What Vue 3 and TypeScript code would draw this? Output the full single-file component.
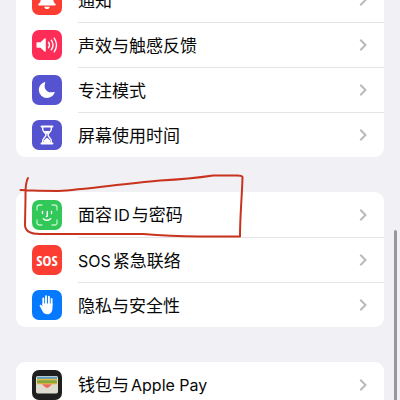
<script setup lang="ts">
type IconName = 'bell' | 'sound' | 'moon' | 'hourglass' | 'face' | 'sos' | 'hand' | 'wallet'

interface TextPart {
  text: string
  latin?: boolean
}

interface SettingRow {
  icon: IconName
  parts: TextPart[]
}

const groups: SettingRow[][] = [
  [
    { icon: 'bell', parts: [{ text: '通知' }] },
    { icon: 'sound', parts: [{ text: '声效与触感反馈' }] },
    { icon: 'moon', parts: [{ text: '专注模式' }] },
    { icon: 'hourglass', parts: [{ text: '屏幕使用时间' }] },
  ],
  [
    { icon: 'face', parts: [{ text: '面容' }, { text: 'ID', latin: true }, { text: '与密码' }] },
    { icon: 'sos', parts: [{ text: 'SOS', latin: true }, { text: '紧急联络' }] },
    { icon: 'hand', parts: [{ text: '隐私与安全性' }] },
  ],
  [{ icon: 'wallet', parts: [{ text: '钱包与' }, { text: 'Apple Pay', latin: true }] }],
]
</script>

<template>
  <main class="screen">
    <nav class="groups">
      <ul v-for="(group, g) in groups" :key="g" class="card">
        <li v-for="row in group" :key="row.icon">
          <a href="#" class="row">
            <span class="tile" :class="row.icon">
              <span v-if="row.icon === 'sos'" class="sos-text" aria-hidden="true">SOS</span>
              <svg v-else viewBox="0 0 30 30" aria-hidden="true">
                <g v-if="row.icon === 'bell'" fill="#fff">
                  <path d="M15 4.500c-4 0-6 3-6 7 0 5-1 6-2.500 7.600-.6.7-.3 1.400.7 1.400h15.600c1 0 1.300-.7.7-1.400C22 17.500 21 16.500 21 11.500c0-4-2-7-6-7Z" />
                  <path d="M12.200 21.800h5.600c-.3 1.500-1.300 2.300-2.800 2.300s-2.500-.8-2.800-2.300Z" />
                </g>
                <g v-else-if="row.icon === 'sound'">
                  <path d="M5.300 12.200h3.200l4-3.700c.7-.6 1.300-.3 1.300.5v12c0 .8-.6 1.100-1.300.5l-4-3.700H5.300c-.5 0-.8-.3-.8-.8v-4c0-.5.300-.8.8-.8Z" fill="#fff" />
                  <g fill="none" stroke="#fff" stroke-linecap="round" stroke-width="1.400">
                    <path d="M16.500 12.200q2 2.800 0 5.600" />
                    <path d="M19.300 10.200q3.400 4.800 0 9.600" />
                    <path d="M22.200 8.200q4.600 6.800 0 13.600" />
                  </g>
                </g>
                <path
                  v-else-if="row.icon === 'moon'"
                  d="M12.400 7.200c.6-.3 1 .1.800.7-2.200 5.800 2.200 10.700 8.600 9.100.7-.2 1.100.2.800.8-1.300 3.200-4.200 5.200-7.600 5.200A8.200 8.200 0 0 1 6.800 15c0-3.500 2.200-6.600 5.600-7.800Z"
                  fill="#fff"
                />
                <g v-else-if="row.icon === 'hourglass'">
                  <path d="M9.500 6.500h11M9.500 23.500h11" stroke="#fff" stroke-width="1.900" stroke-linecap="round" />
                  <path d="M10.700 7v2.300c0 2.700 3.300 3.700 3.300 5.700s-3.300 3-3.300 5.700V23h8.600v-2.300c0-2.700-3.300-3.700-3.300-5.700s3.300-3 3.300-5.700V7" fill="none" stroke="#fff" stroke-width="1.400" />
                  <path d="M12 11h6l-2.500 3h-1ZM14.500 18h1l2.800 2.400v2.100h-6.600v-2.100Z" fill="#fff" />
                </g>
                <g v-else-if="row.icon === 'face'" fill="none" stroke="#fff" stroke-linecap="round">
                  <path
                    d="M5 10V7.500Q5 5 7.500 5H10M20 5h2.500Q25 5 25 7.500V10M25 20v2.500Q25 25 22.500 25H20M10 25H7.500Q5 25 5 22.500V20"
                    stroke="#b9f2c4"
                    stroke-width="1.300"
                  />
                  <path d="M10.500 11.500v2M19.500 11.500v2M15.300 11.500v4.300q0 .8-1 .8M11.300 18.700q3.700 3.300 7.400 0" stroke-width="1.400" />
                </g>
                <g v-else-if="row.icon === 'hand'">
                  <path d="M11.300 15V8.500M14 14V6.300M16.900 14V6.700M19.600 15V9" stroke="#fff" stroke-width="1.900" stroke-linecap="round" />
                  <path
                    d="M10.400 13.500h10.100v4.500c0 3.700-1.900 6.300-5 6.300-2.600 0-4-1.200-5.100-3.300l-2.700-5c-.4-.9.900-1.600 1.600-.9l1.100 1.500Z"
                    fill="#fff"
                  />
                </g>
                <g v-else>
                  <rect x="4" y="6" width="22" height="17.500" rx="1.800" fill="#dedbd0" />
                  <path d="M5 9V7.800Q5 6.800 6 6.800h18q1 0 1 1V9Z" fill="#579cc1" />
                  <path d="M5 8.800h20v1.700H5Z" fill="#e0b94a" />
                  <path d="M5 10.300h20v3.500H5Z" fill="#86a637" />
                  <path d="M5 13h20v1.200H5Z" fill="#d8ae45" />
                  <path d="M10 14.200h10l-1.500 1.600-2.200 1.700q-1.300.8-2.600 0l-2.200-1.700Z" fill="#ef6b58" />
                </g>
              </svg>
            </span>
            <span class="body">
              <span class="label">
                <span v-for="part in row.parts" :key="part.text" :class="{ latin: part.latin }">{{ part.text }}</span>
              </span>
              <svg class="chevron" viewBox="0 0 8 14" aria-hidden="true">
                <path d="m1.300 1.700 5.200 5.300-5.200 5.300" />
              </svg>
            </span>
          </a>
        </li>
      </ul>
    </nav>
    <div class="scroll-thumb"></div>
    <svg class="marker" viewBox="0 0 400 400" aria-hidden="true">
      <path d="M28 178C25 183 25.500 190 25.500 198L25 225C25 231 31 234 40 234L143 234Q170 236 200 236.500L240 236.500C240 215 242 197 242.500 177Q242 175.500 237 175.500L213 175.500Q190 179 160 180.500C120 184 85 189.500 58 191Q38 191 20.500 190" />
    </svg>
  </main>
</template>

<style>
body {
  margin: 0;
  background: #f0f0f5;
}
</style>

<style scoped>
.screen {
  position: relative;
  height: 100vh;
  overflow: hidden;
  background: #f0f0f5;
  color: #080808;
  font: 17px/24px "Noto Sans CJK SC", sans-serif;
}

.groups {
  display: flex;
  flex-direction: column;
  gap: 35px;
  padding: 0 16px;
  margin-top: -23px;
}

.card {
  margin: 0;
  padding: 0;
  list-style: none;
  border-radius: 9px;
  background: #fff;
  overflow: hidden;
}

.row {
  display: flex;
  align-items: center;
  gap: 16px;
  height: 45px;
  padding-left: 16px;
  color: inherit;
  text-decoration: none;
}

.tile {
  display: flex;
  align-items: center;
  justify-content: center;
  flex: none;
  width: 30px;
  height: 30px;
  border-radius: 7px;
  overflow: hidden;
}

.tile svg {
  width: 30px;
  height: 30px;
}

.bell,
.sos {
  background: #fd3c32;
}

.sound {
  background: #fd2d58;
}

.moon,
.hourglass {
  background: #5553cf;
}

.face {
  background: #32c759;
}

.hand {
  background: #067aff;
}

.wallet {
  background: #1f1f1f;
}

.sos-text {
  color: #fff;
  font: 700 15px/30px "Liberation Sans Narrow", "Open Sans Condensed", "Roboto Condensed", Roboto, sans-serif;
}

.body {
  display: flex;
  align-items: center;
  justify-content: space-between;
  flex: 1;
  height: 100%;
  padding-right: 17px;
  box-sizing: border-box;
}

li + li .body {
  border-top: 1px solid #e4e4e7;
}

.label {
  display: flex;
  align-items: baseline;
  gap: 2px;
  white-space: nowrap;
}

.latin {
  font-family: Inter, sans-serif;
  font-size: 16px;
}

.chevron {
  width: 8px;
  height: 14px;
  fill: none;
  stroke: #b9b9bc;
  stroke-width: 2;
}

.scroll-thumb {
  position: absolute;
  top: 230px;
  right: 3px;
  bottom: -8px;
  width: 3px;
  border-radius: 2px;
  background: #97979c;
}

.marker {
  position: absolute;
  top: 0;
  left: 0;
  width: 400px;
  height: 400px;
  fill: none;
  stroke: #c9331d;
  stroke-width: 2;
  stroke-linecap: round;
  stroke-linejoin: round;
  pointer-events: none;
}
</style>
